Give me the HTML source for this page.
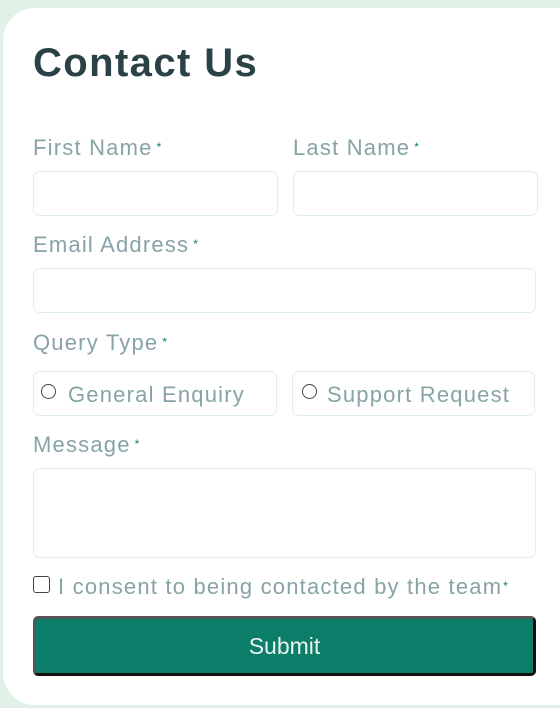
<!DOCTYPE html>
<html><head><meta charset="utf-8"><style>
*{box-sizing:border-box;margin:0;padding:0}
body{width:560px;height:708px;background:#e1f1e7;position:relative;overflow:hidden;font-family:"Liberation Sans",sans-serif}
.card{position:absolute;left:3px;top:8px;width:590px;height:697px;background:#fff;border-radius:32px}
.t{position:absolute;color:#87a3a6;font-size:22px;white-space:nowrap;letter-spacing:1.2px}
.t b{color:#0c7d69;font-size:12px;font-weight:normal;vertical-align:4px;margin-left:4px}
.box{position:absolute;border:1px solid #dfeeee;border-radius:7px;background:#fff}
h1{position:absolute;left:33px;top:41px;font-size:40px;font-weight:bold;color:#2a4246;letter-spacing:1.4px}
.r{position:absolute;width:15px;height:15px;border:1.5px solid #444;border-radius:50%}
.btn{position:absolute;left:33px;top:616px;width:503px;height:60px;background:#0c7d69;border:3px solid;border-color:#555 #111 #111 #555;border-radius:5px;color:#e8f6f1;font-size:23px;text-align:center;line-height:54px}
</style></head><body>
<div class="card"></div>
<h1>Contact Us</h1>
<div class="t" style="left:33px;top:135px">First Name<b>*</b></div>
<div class="t" style="left:293px;top:135px">Last Name<b>*</b></div>
<div class="box" style="left:33px;top:171px;width:245px;height:45px"></div>
<div class="box" style="left:293px;top:171px;width:245px;height:45px"></div>
<div class="t" style="left:33px;top:232px">Email Address<b>*</b></div>
<div class="box" style="left:33px;top:268px;width:503px;height:45px"></div>
<div class="t" style="left:33px;top:330px">Query Type<b>*</b></div>
<div class="box" style="left:33px;top:371px;width:244px;height:45px"></div>
<div class="box" style="left:292px;top:371px;width:243px;height:45px"></div>
<div class="r" style="left:41px;top:384px"></div>
<div class="r" style="left:302px;top:384px"></div>
<div class="t" style="left:68px;top:382px">General Enquiry</div>
<div class="t" style="left:327px;top:382px">Support Request</div>
<div class="t" style="left:33px;top:432px">Message<b>*</b></div>
<div class="box" style="left:33px;top:468px;width:503px;height:90px"></div>
<div style="position:absolute;left:33px;top:576px;width:17px;height:17px;border:1.5px solid #444;border-radius:3px"></div>
<div class="t" style="left:58px;top:574px">I consent to being contacted by the team<b style="margin-left:1px">*</b></div>
<div class="btn">Submit</div>
</body></html>
